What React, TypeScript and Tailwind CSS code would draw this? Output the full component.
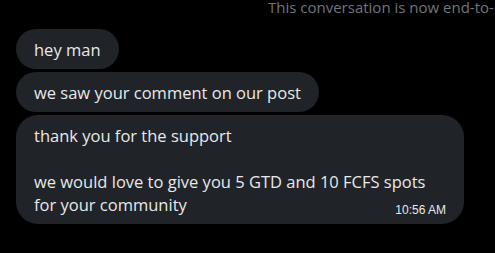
import React from "react";

const bubble =
  "bg-[#202327] text-[#e7e9ea] text-[16.5px] leading-[23px] px-[18px] py-[8.5px] rounded-[22px]";

const App = () => {
  return (
    <div
      className="w-[495px] h-[253px] bg-black overflow-hidden"
      style={{ fontFamily: '"Open Sans", "Noto Sans", sans-serif' }}
    >
      {/* bandeau chiffrement, coupé à droite */}
      <div className="pl-[268px] whitespace-nowrap overflow-hidden text-[15px] leading-[14px] text-[#71767b]">
        This conversation is now end-to-end encrypted.
      </div>

      <div className="flex flex-col items-start gap-[3px] px-4 mt-[15px]">
        <div className={bubble}>hey man</div>
        <div className={bubble}>we saw your comment on our post</div>
        <div className={`${bubble} w-[448px]`}>
          <p>thank you for the support</p>
          <p>&nbsp;</p>
          <p>we would love to give you 5 GTD and 10 FCFS spots</p>
          <div className="flex justify-between items-end">
            <span>for your community</span>
            <span
              className="text-[12px] leading-[12px] text-[#e7e9ea]"
              style={{ fontFamily: '"Liberation Sans", Arial, sans-serif' }}
            >
              10:56 AM
            </span>
          </div>
        </div>
      </div>
    </div>
  );
};

export default App;
